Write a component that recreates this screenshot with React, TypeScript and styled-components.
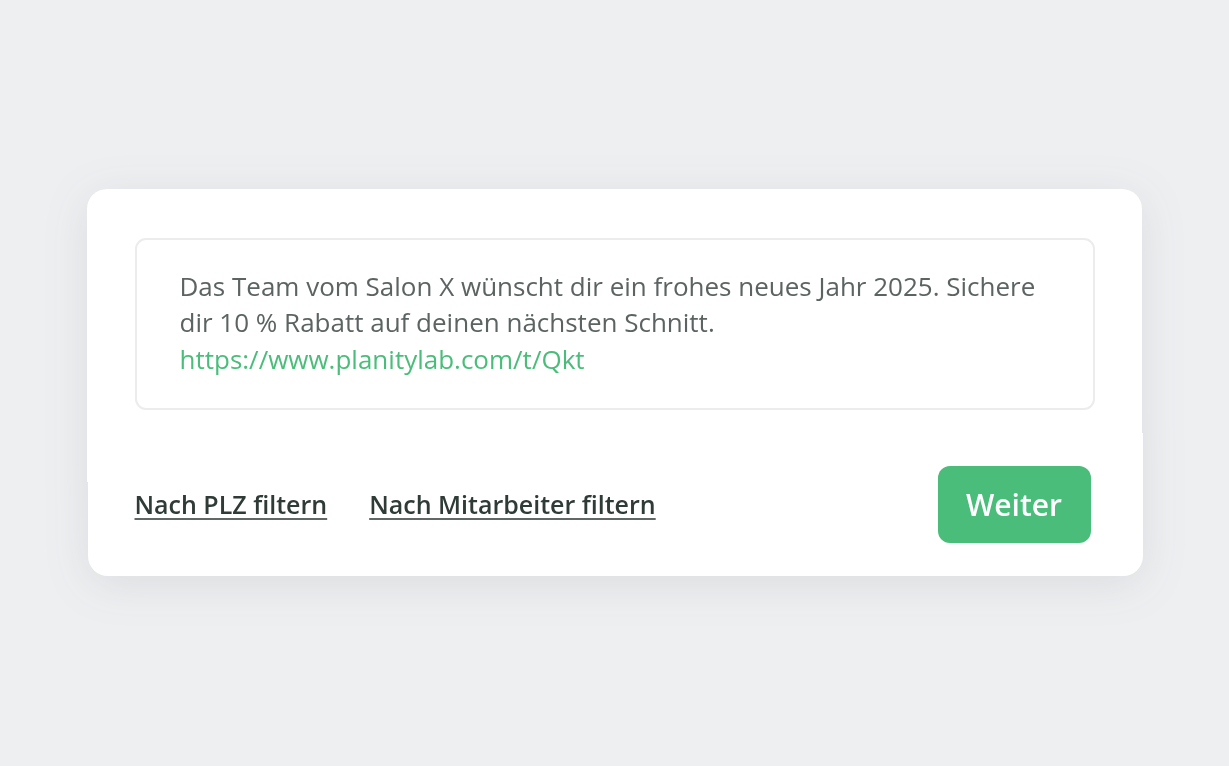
import React from "react";
import styled, { createGlobalStyle } from "styled-components";

const Global = createGlobalStyle`
  html, body { margin: 0; padding: 0; }
  body {
    background: #eeeff1;
    font-family: "Open Sans", "Noto Sans", sans-serif;
  }
`;

const Page = styled.div`
  min-height: 100vh;
  box-sizing: border-box;
  padding-bottom: 2px;
  display: flex;
  align-items: center;
  justify-content: center;
`;

const Card = styled.div`
  width: 1056px;
  display: flex;
  flex-direction: column;
  filter: drop-shadow(0 8px 22px rgba(60, 66, 80, 0.1));
`;

const TopSection = styled.div`
  width: 1055px;
  height: 293px;
  box-sizing: border-box;
  background: #fff;
  border-radius: 20px 20px 0 0;
  padding: 49px 47px 0 48px;
`;

const MessageBox = styled.div`
  box-sizing: border-box;
  height: 172px;
  border: 2px solid #ececec;
  border-radius: 11px;
  padding: 28px 30px 0 43px;
  font-size: 26px;
  line-height: 36.5px;
  color: #5b6462;
`;

const Url = styled.span`
  color: #4abd7a;
`;

const BottomSection = styled.div`
  width: 1055px;
  height: 143px;
  box-sizing: border-box;
  margin-top: -49px;
  margin-left: 1px;
  background: #fff;
  border-radius: 0 0 20px 20px;
  padding: 33px 52px 33px 47px;
  display: flex;
  align-items: center;
`;

const Filters = styled.div`
  display: flex;
  gap: 42px;
  flex: 1;
`;

const FilterLink = styled.a`
  font-size: 25px;
  font-weight: 600;
  color: #2f3b37;
  text-decoration: underline;
  text-decoration-thickness: 2px;
  text-underline-offset: 4px;
  text-decoration-color: #5f6865;
  cursor: pointer;
`;

const Button = styled.button`
  width: 153px;
  height: 77px;
  border: none;
  border-radius: 12px;
  background: #4abd7a;
  color: #fff;
  font-family: inherit;
  font-size: 30px;
  font-weight: 600;
  cursor: pointer;
`;

export default function App() {
  return (
    <>
      <Global />
      <Page>
        <Card>
          <TopSection>
            <MessageBox>
              Das Team vom Salon X wünscht dir ein frohes neues Jahr 2025. Sichere dir 10&nbsp;% Rabatt auf deinen nächsten Schnitt.
              <br />
              <Url>https://www.planitylab.com/t/Qkt</Url>
            </MessageBox>
          </TopSection>
          <BottomSection>
            <Filters>
              <FilterLink>Nach PLZ filtern</FilterLink>
              <FilterLink>Nach Mitarbeiter filtern</FilterLink>
            </Filters>
            <Button>Weiter</Button>
          </BottomSection>
        </Card>
      </Page>
    </>
  );
}
